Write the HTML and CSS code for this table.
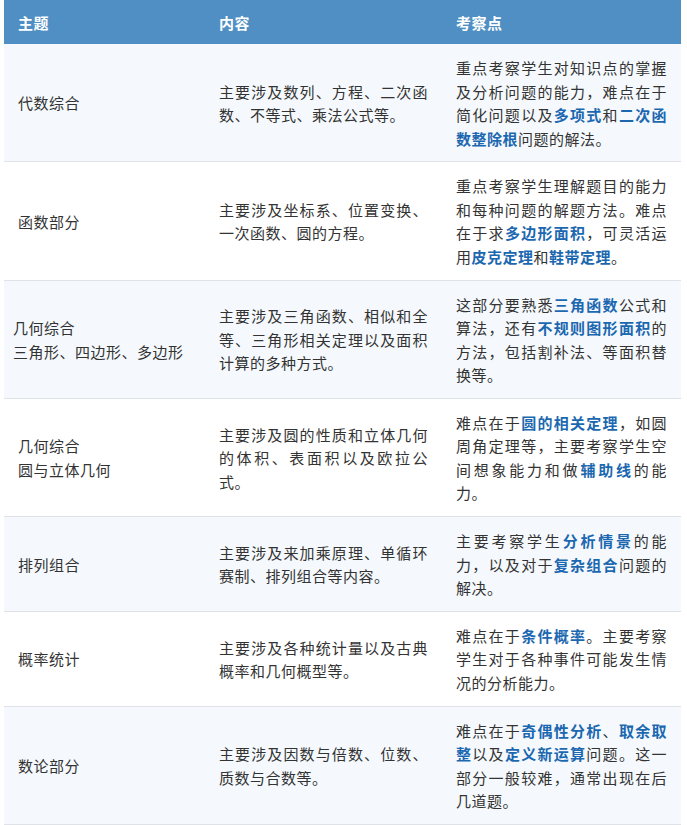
FILE: index.html
```html
<!DOCTYPE html>
<html lang="zh-CN">
<head>
<meta charset="utf-8">
<link rel="stylesheet" href="styles.css">
</head>
<body>
<table class="topics">
  <colgroup>
    <col class="c1"><col class="c2"><col class="c3">
  </colgroup>
  <thead>
    <tr><th>主题</th><th>内容</th><th>考察点</th></tr>
  </thead>
  <tbody>
    <tr>
      <td>代数综合</td>
      <td>主要涉及数列、方程、二次函数、不等式、乘法公式等。</td>
      <td>重点考察学生对知识点的掌握及分析问题的能力，难点在于简化问题以及<b>多项式</b>和<b>二次函数整除根</b>问题的解法。</td>
    </tr>
    <tr>
      <td>函数部分</td>
      <td>主要涉及坐标系、位置变换、一次函数、圆的方程。</td>
      <td>重点考察学生理解题目的能力和每种问题的解题方法。难点在于求<b>多边形面积</b>，可灵活运用<b>皮克定理</b>和<b>鞋带定理</b>。</td>
    </tr>
    <tr>
      <td class="tight">几何综合<br>三角形、四边形、多边形</td>
      <td>主要涉及三角函数、相似和全等、三角形相关定理以及面积计算的多种方式。</td>
      <td>这部分要熟悉<b>三角函数</b>公式和算法，还有<b>不规则图形面积</b>的方法，包括割补法、等面积替换等。</td>
    </tr>
    <tr>
      <td>几何综合<br>圆与立体几何</td>
      <td>主要涉及圆的性质和立体几何的体积、表面积以及欧拉公式。</td>
      <td>难点在于<b>圆的相关定理</b>，如圆周角定理等，主要考察学生空间想象能力和做<b>辅助线</b>的能力。</td>
    </tr>
    <tr>
      <td>排列组合</td>
      <td>主要涉及来加乘原理、单循环赛制、排列组合等内容。</td>
      <td>主要考察学生<b>分析情景</b>的能力，以及对于<b>复杂组合</b>问题的解决。</td>
    </tr>
    <tr>
      <td>概率统计</td>
      <td>主要涉及各种统计量以及古典概率和几何概型等。</td>
      <td>难点在于<b>条件概率</b>。主要考察学生对于各种事件可能发生情况的分析能力。</td>
    </tr>
    <tr>
      <td>数论部分</td>
      <td>主要涉及因数与倍数、位数、质数与合数等。</td>
      <td>难点在于<b>奇偶性分析</b>、<b>取余取整</b>以及<b>定义新运算</b>问题。这一部分一般较难，通常出现在后几道题。</td>
    </tr>
  </tbody>
</table>
</body>
</html>
```

FILE: styles.css
```css
html, body {
  margin: 0;
  padding: 0;
  background: #ffffff;
}

body {
  padding-left: 4px;
  font-family: "Noto Sans CJK SC", "Noto Sans", sans-serif;
  font-size: 15px;
  letter-spacing: 0.5px;
  color: #333333;
}

.topics {
  width: 677px;
  border-collapse: collapse;
  table-layout: fixed;
}

.topics .c1 { width: 201px; }
.topics .c2 { width: 237px; }
.topics .c3 { width: 239px; }

.topics th {
  background: #508fc3;
  color: #ffffff;
  font-weight: bold;
  text-align: left;
  line-height: 23.5px;
  padding: 10.5px 14px 10px;
}

.topics td {
  line-height: 23.5px;
  padding: 12px 14px 11.25px;
  vertical-align: middle;
  text-align: justify;
  border-bottom: 1px solid #dfe2e6;
}

.topics td.tight {
  padding-left: 9px;
  padding-right: 9px;
}

.topics tbody tr:nth-child(odd) td {
  background: #f5f9fd;
}

.topics tbody tr:nth-child(even) td {
  background: #ffffff;
}

.topics b {
  color: #1c68b0;
  font-weight: bold;
}
```
